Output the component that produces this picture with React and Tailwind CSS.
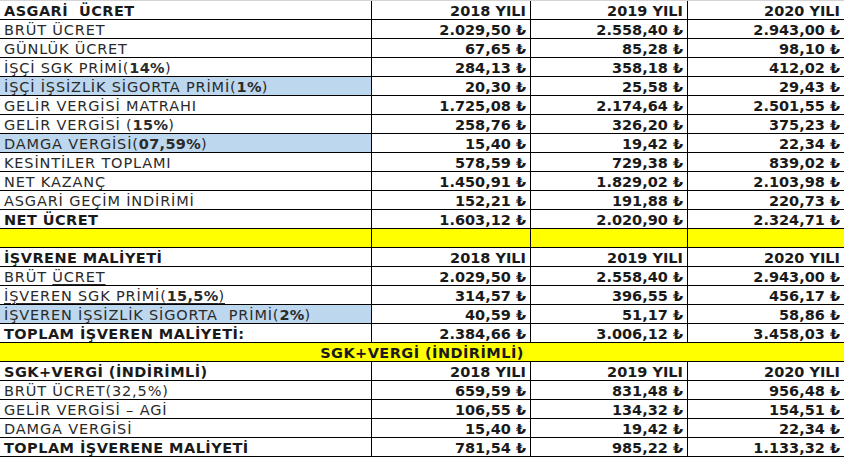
import React from "react";

const B = ({ children }) => <span className="font-bold tracking-[0.3px]">{children}</span>;
const U = ({ children }) => <span className="underline underline-offset-[2px] decoration-[1px]">{children}</span>;

function Row({ label, vals, bold, blue, head, yellow }) {
  const cols = [0, 1, 2];
  return (
    <>
      <div
        className={`border-r border-b border-black pl-[4px] whitespace-pre ${blue ? "bg-[#bdd7ee]" : ""} ${yellow ? "bg-[#ffff00]" : ""} ${bold ? "font-bold tracking-[0.45px] text-[#1a1a1a]" : "tracking-[0.85px] text-[#2a2a2a]"}`}
      >
        {label}
      </div>
      {cols.map((i) => (
        <div
          key={i}
          className={`border-b border-black text-right font-bold pr-[4px] whitespace-pre text-[#1a1a1a] ${i < 2 ? "border-r" : ""} ${yellow ? "bg-[#ffff00]" : ""}`}
        >
          {vals ? (head ? vals[i] : vals[i] + " ₺") : ""}
        </div>
      ))}
    </>
  );
}

const YEARS = ["2018 YILI", "2019 YILI", "2020 YILI"];

export default function App() {
  return (
    <div
      className="w-[844px] h-[457px] bg-white text-[14.5px] leading-[21px] overflow-hidden"
      style={{ fontFamily: '"DejaVu Sans", Verdana, sans-serif' }}
    >
      <div className="grid grid-cols-[372px_159px_157px_156px] auto-rows-[19px] border-t border-[#d4d4d4]">
        <Row label="ASGARİ  ÜCRET" bold head vals={YEARS} />
        <Row label="BRÜT ÜCRET" vals={["2.029,50", "2.558,40", "2.943,00"]} />
        <Row label="GÜNLÜK ÜCRET" vals={["67,65", "85,28", "98,10"]} />
        <Row label={<>İŞÇİ SGK PRİMİ(<B>14%</B>)</>} vals={["284,13", "358,18", "412,02"]} />
        <Row label={<>İŞÇİ İŞSİZLİK SİGORTA PRİMİ(<B>1%</B>)</>} blue vals={["20,30", "25,58", "29,43"]} />
        <Row label="GELİR VERGİSİ MATRAHI" vals={["1.725,08", "2.174,64", "2.501,55"]} />
        <Row label={<>GELİR VERGİSİ (<B>15%</B>)</>} vals={["258,76", "326,20", "375,23"]} />
        <Row label={<>DAMGA VERGİSİ(<B>07,59%</B>)</>} blue vals={["15,40", "19,42", "22,34"]} />
        <Row label="KESİNTİLER TOPLAMI" vals={["578,59", "729,38", "839,02"]} />
        <Row label="NET KAZANÇ" vals={["1.450,91", "1.829,02", "2.103,98"]} />
        <Row label="ASGARİ GEÇİM İNDİRİMİ" vals={["152,21", "191,88", "220,73"]} />
        <Row label="NET ÜCRET" bold vals={["1.603,12", "2.020,90", "2.324,71"]} />
        <Row label="" yellow />
        <Row label="İŞVRENE MALİYETİ" bold head vals={YEARS} />
        <Row label={<>BRÜT <U>ÜCRET</U></>} vals={["2.029,50", "2.558,40", "2.943,00"]} />
        <Row label={<U>İŞVEREN SGK PRİMİ(<B>15,5%</B>)</U>} vals={["314,57", "396,55", "456,17"]} />
        <Row label={<>İŞVEREN İŞSİZLİK SİGORTA  PRİMİ(<B>2%</B>)</>} blue vals={["40,59", "51,17", "58,86"]} />
        <Row label="TOPLAM İŞVEREN MALİYETİ:" bold vals={["2.384,66", "3.006,12", "3.458,03"]} />
        <div className="col-span-4 border-b border-black bg-[#ffff00] text-center font-bold tracking-[0.45px] text-[#1a1a1a]">
          SGK+VERGİ (İNDİRİMLİ)
        </div>
        <Row label="SGK+VERGİ (İNDİRİMLİ)" bold head vals={YEARS} />
        <Row label="BRÜT ÜCRET(32,5%)" vals={["659,59", "831,48", "956,48"]} />
        <Row label="GELİR VERGİSİ – AGİ" vals={["106,55", "134,32", "154,51"]} />
        <Row label="DAMGA VERGİSİ" vals={["15,40", "19,42", "22,34"]} />
        <Row label="TOPLAM İŞVERENE MALİYETİ" bold vals={["781,54", "985,22", "1.133,32"]} />
      </div>
    </div>
  );
}
